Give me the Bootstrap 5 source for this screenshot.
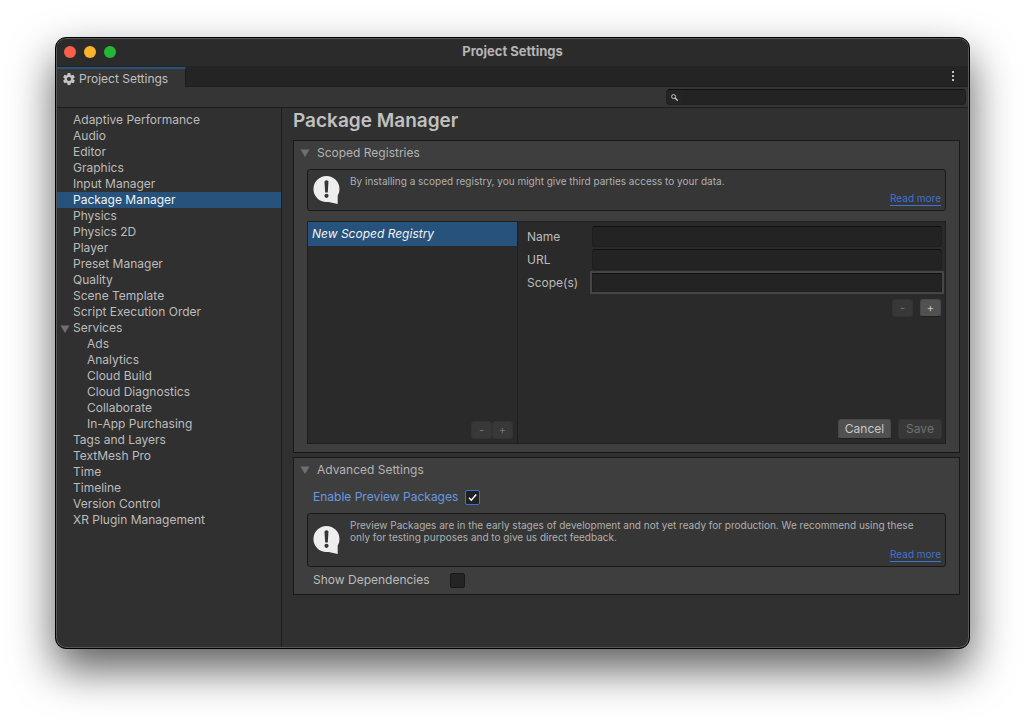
<!DOCTYPE html>
<html lang="en">
<head>
<meta charset="utf-8">
<meta name="viewport" content="width=device-width, initial-scale=1">
<title>Project Settings</title>
<link rel="stylesheet" href="https://cdn.jsdelivr.net/npm/bootstrap@5.3.0/dist/css/bootstrap.min.css">
<style>
  body { background: #fff; color: #bcbcbc; font: 12px/16px Inter, "Liberation Sans", sans-serif; padding: 37px 55px 73px; }
  .app-window { background: #303030; border: 1px solid #000; border-radius: 11px; box-shadow: inset 0 0 0 1px #585858, 0 20px 44px rgba(0,0,0,.64); padding: 1px; }
  .titlebar { height: 27px; background: #2b2b2b; border-radius: 9px 9px 0 0; position: relative; padding-bottom: 3px; }
  .titlebar h1 { font-size: 13px; line-height: 16px; font-weight: 700; color: #b4b4b4; }
  .traffic { position: absolute; left: 7px; top: 7px; gap: 8px; }
  .traffic button { width: 12px; height: 12px; border: 0; border-radius: 50%; padding: 0; }
  .tabstrip { height: 21px; background: #242424; }
  .doc-tab { width: 129px; background: #353535; border: 0; border-top: 2px solid #26527c; border-right: 1px solid #1d1d1d; color: #c0c0c0; padding: 1px 0 0 6px; gap: 4px; margin-top: 1px; }
  .tab-rest { border-bottom: 1px solid #1d1d1d; padding-right: 3px; }
  .dots { width: 24px; border: 0; background: none; padding: 0; }
  .toolbar { height: 21px; background: #353535; border-bottom: 1px solid #1e1e1e; padding: 2px 2px 2px 0; }
  .search-box { width: 300px; background: #242424; border: 1px solid #202020; border-top-color: #101010; border-radius: 4px; padding: 0 4px; gap: 4px; }
  .search-box input, .field { background: #232323; color: #d0d0d0; border: 0; outline: 0; min-width: 0; padding: 0 4px; }
  .side { width: 225px; border-right: 1px solid #1e1e1e; padding-top: 4px; flex: none; }
  .side a { display: block; color: #bcbcbc; text-decoration: none; padding-left: 16px; position: relative; }
  .side ul ul a { padding-left: 30px; }
  .side a.active { background: #26527c; color: #f2f2f2; }
  .side svg { position: absolute; left: 3px; top: 5px; }
  .main-pane { padding: 0 8px 0 11px; }
  .main-pane h2 { font-size: 19px; line-height: 24px; font-weight: 600; color: #c0c0c0; padding-top: 1px; margin: 0 0 7px; }
  .panel { background: #3e3e3e; border: 1px solid #191919; padding: 4px 13px 8px; }
  .panel + .panel { margin-top: 4px; padding-bottom: 6px; }
  .fold { border: 0; background: none; color: #b4b4b4; padding: 0; gap: 7px; margin-left: -7px; }
  .help { background: #363636; border: 1px solid #191919; border-radius: 3px; font-size: 10px; line-height: 12px; color: #b0b0b0; padding: 5px 4px 4px 5px; gap: 10px; }
  .help p { margin: 0 0 5px; padding-right: 8px; }
  .help a { color: #4073cf; text-decoration: none; border-bottom: 1px solid #4073cf; line-height: 13px; }
  .split { background: #2a2a2a; border: 1px solid #1f1f1f; min-height: 223px; margin-top: 10px; }
  .reg-list { width: 210px; border-right: 1px solid #1e1e1e; flex: none; padding-bottom: 4px; }
  .reg-item { background: #26527c; color: #f2f2f2; border: 0; height: 24px; padding: 0 4px; text-align: left; font-style: italic; }
  .reg-form { padding: 4px 3px; }
  .reg-form label { width: 65px; flex: none; }
  .form-line { height: 21px; margin: 0 0 2px 6px; }
  .field { height: 21px; border: 1px solid #1f1f1f; border-top-color: #101010; border-radius: 3px; }
  .field.multi { outline: 2px solid #464646; border-radius: 0; resize: none; display: block; height: 19px; }
  .ubtn { background: #515151; color: #c8c8c8; border: 1px solid #484848; border-bottom-color: #1f1f1f; border-radius: 3px; padding: 0; line-height: 16px; height: 20px; }
  .ubtn:disabled { background: #383838; color: #727272; border-color: #333; }
  .tiny { width: 21px; height: 18px; font-size: 11px; }
  .scope-buttons { gap: 7px; padding: 4px 1px 0 0; }
  .form-buttons { gap: 7px; }
  .check-line { gap: 7px; padding-left: 6px; margin-top: 5px; }
  .check-line label { min-width: 130px; }
  .fold + .check-line { margin-top: 11px; }
  .fold + .check-line label { color: #6699e0; }
  .tick { appearance: none; width: 15px; height: 15px; margin: 0; background: #242424; border: 1px solid #191919; border-radius: 2px; }
  .tick:checked { border-color: #4073cf; background: #1f2023 url("data:image/svg+xml,%3Csvg xmlns='http://www.w3.org/2000/svg' viewBox='0 0 13 13'%3E%3Cpath d='M3 6.8 5.3 9.2 10.2 3.6' fill='none' stroke='white' stroke-width='1.5'/%3E%3C/svg%3E"); }
</style>
</head>
<body class="min-vh-100 d-flex flex-column">
<svg class="d-none" aria-hidden="true">
  <symbol id="fold-arrow" viewBox="0 0 10 8"><path d="M0.5 0.5h9L5 8z" fill="#6f6f6f"/></symbol>
  <symbol id="alert-bubble" viewBox="0 0 26 29"><path d="M13 0a13 13 0 1 1-.1 26A13 13 0 0 1 13 0zM14 25.7 24.2 19.5V28z" fill="#eeeeef"/><path d="M11 5.5Q13 2.9 15 5.5L14.3 16.5h-2.6z" fill="#363636"/><circle cx="13" cy="19.8" r="2.1" fill="#363636"/></symbol>
</svg>
<div class="app-window flex-grow-1 d-flex flex-column">
  <header class="titlebar d-flex align-items-center justify-content-center">
    <div class="traffic d-flex">
      <button type="button" aria-label="Close" style="background:#fc5f49"></button>
      <button type="button" aria-label="Minimize" style="background:#fdb329"></button>
      <button type="button" aria-label="Zoom" style="background:#24b735"></button>
    </div>
    <h1 class="m-0">Project Settings</h1>
  </header>
  <div class="tabstrip d-flex">
    <button type="button" class="doc-tab d-flex align-items-center">
      <svg width="12" height="12" viewBox="0 0 12 12"><g fill="#c4c4c4"><path id="tooth" d="M4.6 0h2.8l.5 3H4.1z"/><use href="#tooth" transform="rotate(60 6 6)"/><use href="#tooth" transform="rotate(120 6 6)"/><use href="#tooth" transform="rotate(180 6 6)"/><use href="#tooth" transform="rotate(240 6 6)"/><use href="#tooth" transform="rotate(300 6 6)"/></g><circle cx="6" cy="6" r="3.2" fill="none" stroke="#c4c4c4" stroke-width="2.2"/></svg>
      Project Settings
    </button>
    <div class="tab-rest flex-grow-1 d-flex justify-content-end">
      <button type="button" class="dots d-flex align-items-center justify-content-center" aria-label="Tab menu"><svg width="2" height="10" viewBox="0 0 2 10" fill="#c4c4c4"><path d="M0 0h2v2H0zM0 4h2v2H0zM0 8h2v2H0z"/></svg></button>
    </div>
  </div>
  <div class="toolbar d-flex justify-content-end">
    <div class="search-box d-flex align-items-center">
      <svg width="7" height="7" viewBox="0 0 7 7" fill="none" stroke="#c4c4c4"><circle cx="2.6" cy="2.6" r="2"/><path d="M4 4l2.8 2.8" stroke-width="1.3"/></svg>
      <input type="text" class="flex-grow-1 h-100" aria-label="Search settings">
    </div>
  </div>
  <div class="flex-grow-1 d-flex">
    <nav class="side" aria-label="Settings categories">
      <ul class="list-unstyled m-0">
        <li><a href="#">Adaptive Performance</a></li>
        <li><a href="#">Audio</a></li>
        <li><a href="#">Editor</a></li>
        <li><a href="#">Graphics</a></li>
        <li><a href="#">Input Manager</a></li>
        <li><a href="#" class="active" aria-current="page">Package Manager</a></li>
        <li><a href="#">Physics</a></li>
        <li><a href="#">Physics 2D</a></li>
        <li><a href="#">Player</a></li>
        <li><a href="#">Preset Manager</a></li>
        <li><a href="#">Quality</a></li>
        <li><a href="#">Scene Template</a></li>
        <li><a href="#">Script Execution Order</a></li>
        <li><a href="#"><svg width="10" height="8"><use href="#fold-arrow"/></svg>Services</a>
          <ul class="list-unstyled">
            <li><a href="#">Ads</a></li>
            <li><a href="#">Analytics</a></li>
            <li><a href="#">Cloud Build</a></li>
            <li><a href="#">Cloud Diagnostics</a></li>
            <li><a href="#">Collaborate</a></li>
            <li><a href="#">In-App Purchasing</a></li>
          </ul></li>
        <li><a href="#">Tags and Layers</a></li>
        <li><a href="#">TextMesh Pro</a></li>
        <li><a href="#">Time</a></li>
        <li><a href="#">Timeline</a></li>
        <li><a href="#">Version Control</a></li>
        <li><a href="#">XR Plugin Management</a></li>
      </ul>
    </nav>
    <main class="main-pane flex-grow-1">
      <h2>Package Manager</h2>
      <section class="panel">
        <button type="button" class="fold d-flex align-items-center" aria-expanded="true"><svg width="10" height="8"><use href="#fold-arrow"/></svg>Scoped Registries</button>
        <div class="help d-flex mt-2">
          <svg class="flex-shrink-0 align-self-center" width="27" height="29"><use href="#alert-bubble"/></svg>
          <div class="flex-grow-1 d-flex flex-column">
            <p>By installing a scoped registry, you might give third parties access to your data.</p>
            <a href="#" class="align-self-end mt-auto">Read more</a>
          </div>
        </div>
        <div class="split d-flex">
          <div class="reg-list d-flex flex-column">
            <button type="button" class="reg-item">New Scoped Registry</button>
            <div class="d-flex justify-content-end mt-auto pe-1">
              <button type="button" class="ubtn tiny" disabled aria-label="Remove registry">-</button>
              <button type="button" class="ubtn tiny" disabled aria-label="Add registry">+</button>
            </div>
          </div>
          <form class="reg-form flex-grow-1 d-flex flex-column">
            <div class="form-line d-flex align-items-center"><label for="reg-name">Name</label><input id="reg-name" type="text" class="field flex-grow-1"></div>
            <div class="form-line d-flex align-items-center"><label for="reg-url">URL</label><input id="reg-url" type="text" class="field flex-grow-1"></div>
            <div class="form-line d-flex align-items-center"><label for="reg-scope">Scope(s)</label><textarea id="reg-scope" rows="1" class="field multi flex-grow-1"></textarea></div>
            <div class="scope-buttons d-flex justify-content-end">
              <button type="button" class="ubtn tiny h-auto" disabled aria-label="Remove scope">-</button>
              <button type="button" class="ubtn tiny h-auto" aria-label="Add scope">+</button>
            </div>
            <div class="form-buttons d-flex justify-content-end mt-auto">
              <button type="button" class="ubtn px-1" style="width:53px">Cancel</button>
              <button type="submit" class="ubtn px-1" style="width:44px" disabled>Save</button>
            </div>
          </form>
        </div>
      </section>
      <section class="panel">
        <button type="button" class="fold d-flex align-items-center" aria-expanded="true"><svg width="10" height="8"><use href="#fold-arrow"/></svg>Advanced Settings</button>
        <div class="d-flex align-items-center check-line"><label for="preview">Enable Preview Packages</label><input id="preview" type="checkbox" class="tick" checked></div>
        <div class="help d-flex mt-2">
          <svg class="flex-shrink-0 align-self-center" width="27" height="29"><use href="#alert-bubble"/></svg>
          <div class="flex-grow-1 d-flex flex-column">
            <p>Preview Packages are in the early stages of development and not yet ready for production. We recommend using these only for testing purposes and to give us direct feedback.</p>
            <a href="#" class="align-self-end mt-auto">Read more</a>
          </div>
        </div>
        <div class="d-flex align-items-center check-line"><label for="deps">Show Dependencies</label><input id="deps" type="checkbox" class="tick"></div>
      </section>
    </main>
  </div>
</div>
<script src="https://cdn.jsdelivr.net/npm/bootstrap@5.3.0/dist/js/bootstrap.bundle.min.js"></script>
</body>
</html>
